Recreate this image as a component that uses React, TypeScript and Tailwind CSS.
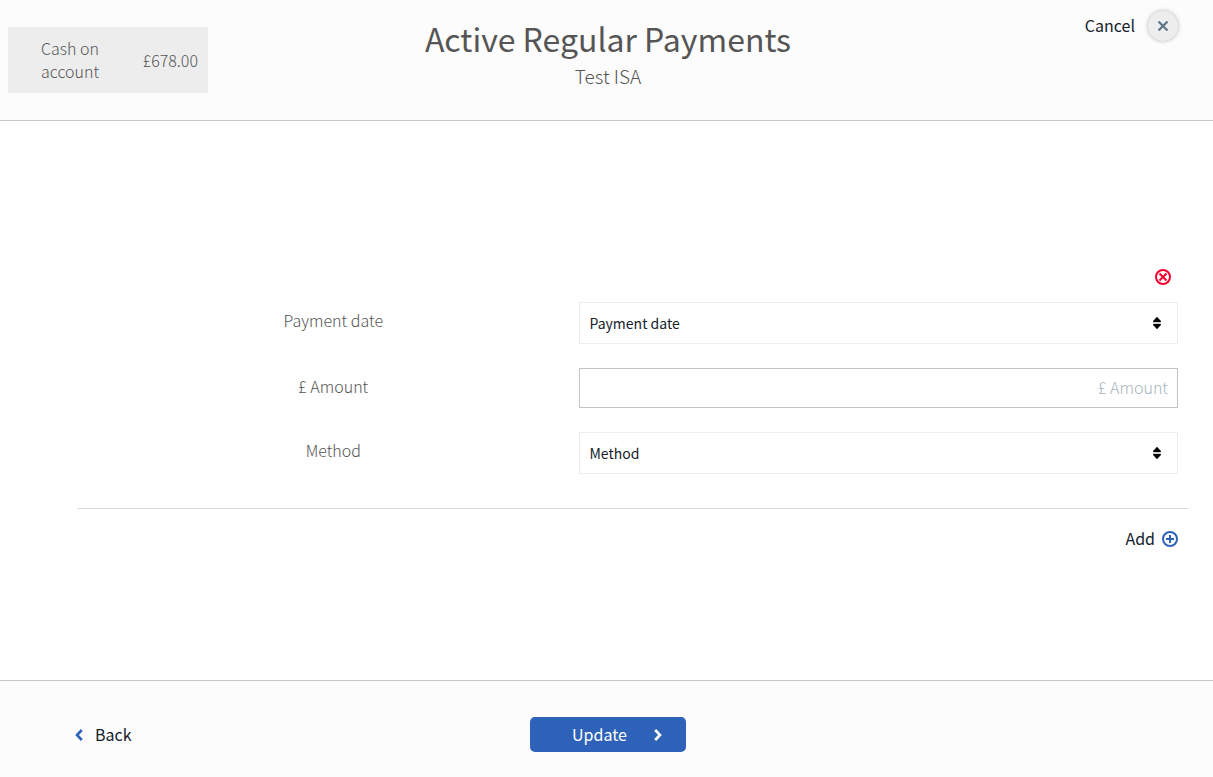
import type { ReactNode } from 'react';

function SortIcon() {
  return (
    <svg
      className="pointer-events-none absolute right-[17px] top-1/2 -translate-y-1/2"
      width="8"
      height="12"
      viewBox="0 0 8 12"
      aria-hidden="true"
    >
      <path d="M4 0 7.7 4Q8.2 5 7.4 5H.6Q-.2 5 .3 4ZM4 12 7.7 8Q8.2 7 7.4 7H.6Q-.2 7 .3 8Z" fill="#000" stroke="#000" strokeWidth=".4" />
    </svg>
  );
}

function Chevron({ d }: { d: string }) {
  return (
    <svg width="8" height="12" viewBox="0 0 8 12" fill="none" stroke="currentColor" strokeWidth="2.6" aria-hidden="true">
      <path d={d} />
    </svg>
  );
}

function Field({ id, label, children }: { id: string; label: string; children: ReactNode }) {
  return (
    <div className="grid grid-cols-[9fr_11fr]">
      <label htmlFor={id} className="pt-[7px] text-center font-light text-[#555]">
        {label}
      </label>
      <div className="relative">{children}</div>
    </div>
  );
}

function SelectField({ id, label }: { id: string; label: string }) {
  return (
    <Field id={id} label={label}>
      <select
        id={id}
        className="block h-[42px] w-full appearance-none border border-[#ececec] bg-white px-[10px] text-[14px] text-[#14212b]"
      >
        <option>{label}</option>
      </select>
      <SortIcon />
    </Field>
  );
}

export default function App() {
  return (
    <div className="flex min-h-screen flex-col bg-white font-['Noto_Sans_CJK_SC',sans-serif] text-[16px] leading-[23px] text-[#14212b]">
      <header className="grid grid-cols-[1fr_auto_1fr] items-start border-b border-[#c8c8c8] bg-[#fcfcfc] pb-[27px] pl-2 pr-[35px]">
        <div className="mt-[27px] flex w-[200px] items-center justify-between bg-[#ededed] py-[10px] pl-[33px] pr-[10px] font-light text-[#555]">
          <span className="w-16">Cash on account</span>
          <span>£678.00</span>
        </div>
        <div className="pl-[30px] pt-[15px] text-center">
          <h1 className="text-[32px] leading-[47px] text-[#555]">Active Regular Payments</h1>
          <p className="text-[19px] font-light leading-[28px] text-[#555]">Test ISA</p>
        </div>
        <button type="button" className="mt-[11px] flex items-start gap-[13px] justify-self-end leading-[28px]">
          Cancel
          <span className="flex size-[30px] items-center justify-center rounded-full bg-[#ededed] text-[#5b7486] shadow-[0_0_4px_rgba(0,0,0,0.3)]">
            <svg width="10" height="10" viewBox="0 0 10 10" stroke="currentColor" strokeWidth="2.2" aria-hidden="true">
              <path d="M.5.5 9.5 9.5M9.5.5.5 9.5" />
            </svg>
          </span>
        </button>
      </header>

      <main className="flex-1 pb-16 pl-[78px] pr-[25px] pt-[148px]">
        <section className="border-b border-[#d8d8d8] px-[10px] pb-[34px]">
          <div className="flex justify-end pb-[17px] pr-[7px]">
            <button type="button" aria-label="Remove payment" className="text-[#f5002d]">
              <svg width="16" height="16" viewBox="0 0 16 16" fill="none" stroke="currentColor" strokeWidth="2" aria-hidden="true">
                <circle cx="8" cy="8" r="7" />
                <path d="m4.5 4.5 7 7m0-7-7 7" />
              </svg>
            </button>
          </div>
          <div className="flex flex-col gap-6">
            <SelectField id="payment-date" label="Payment date" />
            <Field id="amount" label="£ Amount">
              <input
                id="amount"
                type="text"
                placeholder="£ Amount"
                className="block h-10 w-full border border-[#c4c4c4] bg-white pb-[2px] pl-[10px] pr-[9px] text-right font-light placeholder:text-[#a9b4bd]"
              />
            </Field>
            <SelectField id="method" label="Method" />
          </div>
        </section>
        <div className="flex justify-end pr-[10px] pt-[18px]">
          <button type="button" className="flex items-center gap-[7px]">
            Add
            <svg width="16" height="16" viewBox="0 0 16 16" fill="none" stroke="#2e62b9" strokeWidth="2" aria-hidden="true">
              <circle cx="8" cy="8" r="7" />
              <path d="M8 4v8M4 8h8" />
            </svg>
          </button>
        </div>
      </main>

      <footer className="grid grid-cols-[1fr_auto_1fr] items-center border-t border-[#c8c8c8] bg-[#fcfcfc] pb-[25px] pl-[3px] pt-9">
        <a href="#back" className="flex items-center gap-3 justify-self-start pl-[72px]">
          <span className="text-[#2e62b9]">
            <Chevron d="M6.8 1 2 6l4.8 5" />
          </span>
          Back
        </a>
        <button
          type="submit"
          className="flex h-[35px] w-[156px] items-center justify-between rounded-[5px] bg-[#2e62b9] pl-[42px] pr-6 text-white"
        >
          Update
          <Chevron d="M1.2 1 6 6l-4.8 5" />
        </button>
      </footer>
    </div>
  );
}
